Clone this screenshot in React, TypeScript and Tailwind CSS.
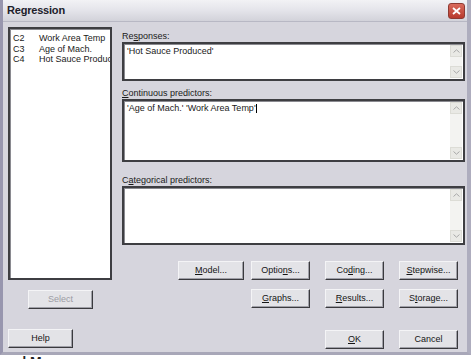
import React from "react";

const font = { fontFamily: '"Liberation Sans", Arial, sans-serif' };

const Btn = ({
  children,
  w = "w-[59px]",
  disabled = false,
}: {
  children: React.ReactNode;
  w?: string;
  disabled?: boolean;
}) => (
  <div
    className={`${w} h-[19px] shrink-0 flex items-center justify-center border border-t-[#f4f4f6] border-l-[#f4f4f6] border-r-[#3a3a3e] border-b-[#3a3a3e] bg-[#e3e3e7] shadow-[inset_-1px_-1px_0_#a0a0a8] text-[9px] ${
      disabled ? "text-[#9c9ca4]" : "text-[#151515]"
    }`}
  >
    {children}
  </div>
);

const ScrollArrows = () => (
  <div className="w-[12px] flex flex-col justify-between bg-[#f3f3f1] my-[1px] mr-[1px]">
    <div className="h-[12px] bg-[#e9e9e5] border border-[#dcdcd6] flex items-center justify-center">
      <svg width="7" height="4" viewBox="0 0 7 4">
        <path d="M0.5 3.5 L3.5 0.8 L6.5 3.5" fill="none" stroke="#a8a8a8" strokeWidth="1" />
      </svg>
    </div>
    <div className="h-[12px] bg-[#e9e9e5] border border-[#dcdcd6] flex items-center justify-center">
      <svg width="7" height="4" viewBox="0 0 7 4">
        <path d="M0.5 0.5 L3.5 3.2 L6.5 0.5" fill="none" stroke="#a8a8a8" strokeWidth="1" />
      </svg>
    </div>
  </div>
);

const Field = ({ h, children }: { h: string; children?: React.ReactNode }) => (
  <div className={`${h} flex bg-white border-2 border-[#3e3e42] shadow-[inset_1px_1px_0_#8a8a90]`}>
    <div className="flex-1 pl-[3px] pt-[2px] text-[9px] text-[#1a1a1a] leading-[11px]">{children}</div>
    <ScrollArrows />
  </div>
);

const Label = ({ children, mt }: { children: React.ReactNode; mt: string }) => (
  <div className={`${mt} h-[11px] leading-[11px] text-[9px] text-[#1a1a1a]`}>{children}</div>
);

export default function App() {
  const vars = [
    ["C2", "Work Area Temp"],
    ["C3", "Age of Mach."],
    ["C4", "Hot Sauce Produced"],
  ];
  return (
    <div className="w-[474px] h-[359px] bg-white overflow-hidden" style={font}>
      <div className="w-[471px] h-[355px] flex flex-col bg-[#d6d5dd] border-l-[3px] border-r-[4px] border-b-[3px] border-l-[#9896ae] border-r-[#aeadbe] border-b-[#a8a7b8]">
        {/* title bar */}
        <div className="h-[22px] shrink-0 flex items-center justify-between pl-[4px] pr-[2px] bg-gradient-to-b from-[#f2f2f5] via-[#e4e4ea] to-[#d2d2da] border-b border-[#b8b8c4]">
          <span className="text-[11px] font-bold text-[#20202a] tracking-[-0.2px]">Regression</span>
          <div className="w-[17px] h-[16px] rounded-[3px] bg-gradient-to-b from-[#d96a5c] to-[#b8392c] border border-[#8e3a32] flex items-center justify-center">
            <svg width="9" height="8" viewBox="0 0 9 8">
              <path d="M1 1 L8 7 M8 1 L1 7" stroke="white" strokeWidth="1.8" />
            </svg>
          </div>
        </div>

        {/* body */}
        <div className="flex pl-[5px] pt-[5px]">
          {/* left column */}
          <div className="w-[104px] flex flex-col">
            <div className="h-[253px] bg-white border-2 border-[#3e3e42] shadow-[inset_1px_1px_0_#8a8a90] pt-[4px] pl-[3px] overflow-hidden">
              {vars.map(([c, n]) => (
                <div key={c} className="flex h-[10.5px] leading-[10.5px] text-[9px] text-[#1a1a1a] whitespace-nowrap">
                  <span className="w-[26px] shrink-0">{c}</span>
                  <span>{n}</span>
                </div>
              ))}
            </div>
            <div className="mt-[10px] ml-[20px]">
              <Btn w="w-[65px]" disabled>
                Select
              </Btn>
            </div>
            <div className="mt-[20px]">
              <Btn w="w-[65px]">Help</Btn>
            </div>
          </div>

          {/* right column */}
          <div className="ml-[10px] w-[343px] flex flex-col">
            <Label mt="mt-[4px]">
              Re<u>s</u>ponses:
            </Label>
            <Field h="h-[39px]">'Hot Sauce Produced'</Field>
            <Label mt="mt-[7px]">
              <u>C</u>ontinuous predictors:
            </Label>
            <Field h="h-[63px]">
              'Age of Mach.' 'Work Area Temp'<span className="inline-block w-[1px] h-[9px] bg-black align-middle" />
            </Field>
            <Label mt="mt-[13px]">
              C<u>a</u>tegorical predictors:
            </Label>
            <Field h="h-[59px]" />

            <div className="mt-[16px] flex justify-end pr-[7px] gap-[15px]">
              <div className="flex gap-[7px]">
                <Btn w="w-[66px]">
                  <u>M</u>odel...
                </Btn>
                <Btn>
                  Optio<u>n</u>s...
                </Btn>
              </div>
              <Btn>
                Co<u>d</u>ing...
              </Btn>
              <Btn>
                <u>S</u>tepwise...
              </Btn>
            </div>
            <div className="mt-[9px] flex justify-end pr-[7px] gap-[15px]">
              <Btn>
                <u>G</u>raphs...
              </Btn>
              <Btn>
                <u>R</u>esults...
              </Btn>
              <Btn>
                S<u>t</u>orage...
              </Btn>
            </div>
            <div className="mt-[22px] flex justify-end pr-[7px] gap-[15px]">
              <Btn>
                <u>O</u>K
              </Btn>
              <Btn>Cancel</Btn>
            </div>
          </div>
        </div>
      </div>
      <div className="h-[4px] overflow-hidden pl-[16px]">
        <div className="text-[14px] font-bold leading-[14px] text-[#222]">&#x644; M</div>
      </div>
    </div>
  );
}
